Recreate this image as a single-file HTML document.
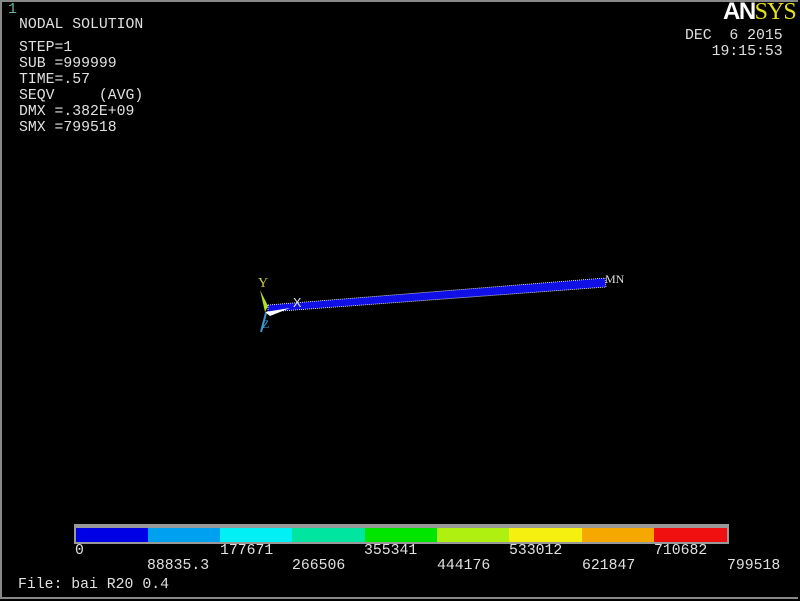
<!DOCTYPE html>
<html><head><style>
body{margin:0;background:#000;width:800px;height:601px;overflow:hidden;position:relative;font-family:"Liberation Mono",monospace;color:#ddd}
.f{position:absolute;left:0;top:0;width:798px;height:599px;border-left:2px solid #888;border-top:2px solid #888;border-bottom:2px solid #888;box-sizing:border-box}
.t{position:absolute;font-size:14.8px;line-height:16px;white-space:pre;color:#e0e0e0}
</style></head><body>
<div class="f"></div>
<div class="t" style="left:8px;top:2px;color:#5fb3a0;font-size:15px">1</div>
<div class="t" style="left:19px;top:17px">NODAL SOLUTION</div>
<div class="t" style="left:19px;top:40px">STEP=1
SUB =999999
TIME=.57
SEQV     (AVG)
DMX =.382E+09
SMX =799518</div>
<div class="t" style="left:723px;top:-1px;font-family:'Liberation Sans',sans-serif;font-weight:bold;font-size:24px;line-height:26px;letter-spacing:-1.5px;color:#fff">AN<span style="color:#e6e020;font-family:'Liberation Serif',serif;font-weight:normal;letter-spacing:-1px">SYS</span></div>
<div class="t" style="left:685px;top:28px">DEC  6 2015
   19:15:53</div>
<svg width="800" height="601" style="position:absolute;left:0;top:0">
<polygon points="268,305 605,278 606,287 268,312" fill="#1010e6" stroke="#fff" stroke-width="0.8" stroke-dasharray="1,1"/>
<polygon points="260,290 268,306 265,312" fill="#b0e020"/>
<polygon points="265,312 290,308 270,316" fill="#fff"/>
<line x1="266" y1="313" x2="261" y2="332" stroke="#3a9ad0" stroke-width="2"/>
<text x="258" y="287" fill="#c8d040" font-size="14" font-family="Liberation Serif">Y</text>
<text x="293" y="307" fill="#ddd" font-size="14" font-family="Liberation Mono">X</text>
<text x="262" y="328" fill="#3a9ad0" font-size="12" font-family="Liberation Serif">Z</text>
<text x="605" y="283" fill="#ddd" font-size="12" font-family="Liberation Serif">MN</text>
<rect x="74" y="524" width="655" height="20" fill="#999"/>
<rect x="76" y="528" width="72" height="14" fill="#0000e6"/>
<rect x="148" y="528" width="72" height="14" fill="#00a0f0"/>
<rect x="220" y="528" width="72" height="14" fill="#00f0f5"/>
<rect x="292" y="528" width="73" height="14" fill="#00e6a0"/>
<rect x="365" y="528" width="72" height="14" fill="#00e600"/>
<rect x="437" y="528" width="72" height="14" fill="#b0f010"/>
<rect x="509" y="528" width="73" height="14" fill="#f5f010"/>
<rect x="582" y="528" width="72" height="14" fill="#f5a800"/>
<rect x="654" y="528" width="73" height="14" fill="#f01010"/>
</svg>
<div class="t" style="left:75px;top:543px">0</div>
<div class="t" style="left:220px;top:543px">177671</div>
<div class="t" style="left:364px;top:543px">355341</div>
<div class="t" style="left:509px;top:543px">533012</div>
<div class="t" style="left:654px;top:543px">710682</div>
<div class="t" style="left:147px;top:558px">88835.3</div>
<div class="t" style="left:292px;top:558px">266506</div>
<div class="t" style="left:437px;top:558px">444176</div>
<div class="t" style="left:582px;top:558px">621847</div>
<div class="t" style="left:727px;top:558px">799518</div>
<div class="t" style="left:18px;top:577px">File: bai R20 0.4</div>
</body></html>
